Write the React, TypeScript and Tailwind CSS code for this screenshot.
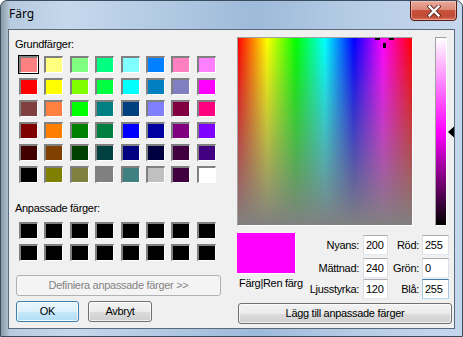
import React from "react";

const basic: string[][] = [
  ["#FF8080", "#FFFF80", "#80FF80", "#00FF80", "#80FFFF", "#0080FF", "#FF80C0", "#FF80FF"],
  ["#FF0000", "#FFFF00", "#80FF00", "#00FF40", "#00FFFF", "#0080C0", "#8080C0", "#FF00FF"],
  ["#804040", "#FF8040", "#00FF00", "#008080", "#004080", "#8080FF", "#800040", "#FF0080"],
  ["#800000", "#FF8000", "#008000", "#008040", "#0000FF", "#0000A0", "#800080", "#8000FF"],
  ["#400000", "#804000", "#004000", "#004040", "#000080", "#000040", "#400040", "#400080"],
  ["#000000", "#808000", "#808040", "#808080", "#408080", "#C0C0C0", "#400040", "#FFFFFF"],
];

const custom: string[][] = [Array(8).fill("#000000"), Array(8).fill("#000000")];

function Cell({ color, selected }: { color: string; selected?: boolean }) {
  return (
    <div className="w-[26px] h-[22px]">
      <div
        className={
          selected
            ? "w-[21px] h-[19px] border border-black"
            : "w-[21px] h-[19px] border border-transparent"
        }
      >
        <div
          className="w-[19px] h-[17px] border-t-2 border-l-2 border-t-[#808080] border-l-[#808080] border-r border-b border-r-white border-b-white"
          style={{ backgroundColor: color }}
        />
      </div>
    </div>
  );
}

function Grid({ rows, selectFirst }: { rows: string[][]; selectFirst?: boolean }) {
  return (
    <div className="ml-[2px] flex flex-col">
      {rows.map((r, i) => (
        <div key={i} className="flex">
          {r.map((c, j) => (
            <Cell key={j} color={c} selected={selectFirst && i === 0 && j === 0} />
          ))}
        </div>
      ))}
    </div>
  );
}

function Input({ value, focused }: { value: string; focused?: boolean }) {
  return (
    <div
      className={
        focused
          ? "h-[20px] bg-white border border-t-[#3d7bad] border-l-[#a4c9e3] border-r-[#a4c9e3] border-b-[#b7d9ed] flex items-center pl-[2px]"
          : "h-[20px] bg-white border border-t-[#abadb3] border-l-[#dbdfe6] border-r-[#dbdfe6] border-b-[#e3e9ef] flex items-center pl-[2px]"
      }
    >
      {value}
    </div>
  );
}

function Label({ text }: { text: string }) {
  return <div className="h-[20px] flex items-center justify-end whitespace-nowrap">{text}</div>;
}

const btn =
  "h-[21px] rounded-[3px] border border-[#707070] bg-[linear-gradient(to_bottom,#f2f2f2_0%,#ebebeb_50%,#dddddd_51%,#cfcfcf_100%)] shadow-[inset_0_0_0_1px_rgba(255,255,255,0.7)] flex items-center justify-center text-black";

export default function App() {
  return (
    <div className="w-[463px] h-[337px] bg-white">
      <div className="w-[463px] h-[337px] rounded-t-[7px] border border-[#3b4c5e] bg-[linear-gradient(to_right,#8c9aa0_0%,#b7cbe0_2%,#c5d8ec_15%,#a8c2de_45%,#9dbad9_55%,#b7cde6_78%,#c4d7ed_100%)] flex flex-col overflow-hidden">
        {/* title bar */}
        <div className="h-[28px] flex items-start justify-between pl-[8px] pr-[5px]">
          <div
            className="mt-[5px] text-[12px] leading-[16px] text-black"
            style={{ fontFamily: '"Segoe UI", "Noto Sans", sans-serif' }}
          >
            Färg
          </div>
          <div className="-mt-[1px] w-[47px] h-[21px] rounded-b-[4px] border border-[#5a1a10] bg-[linear-gradient(to_bottom,#e9a99b_0%,#dd8a78_45%,#c8513c_50%,#c24b36_80%,#d6705a_100%)] shadow-[inset_0_0_0_1px_rgba(255,220,210,0.5)] flex items-center justify-center">
            <svg width="14" height="12" viewBox="0 0 14 12">
              <path d="M2.5 1.5 L11.5 10.5 M11.5 1.5 L2.5 10.5" stroke="#5b2a22" strokeWidth="4.2" strokeLinecap="square" />
              <path d="M2.5 1.5 L11.5 10.5 M11.5 1.5 L2.5 10.5" stroke="#ffffff" strokeWidth="2.4" strokeLinecap="square" />
            </svg>
          </div>
        </div>
        {/* client */}
        <div className="flex-1 px-[7px] pb-[7px] flex">
          <div
            className="w-[447px] h-[300px] border border-[#5b6a7a] bg-[#f0f0f0] flex pl-[7px] text-[11px] leading-[13px] tracking-[-0.3px] text-black"
            style={{ fontFamily: '"Liberation Sans", Arial, sans-serif' }}
          >
            {/* left column */}
            <div className="w-[205px] flex flex-col pt-[8px]">
              <div className="h-[13px] -ml-[1px]">Grundfärger:</div>
              <div className="mt-[4px]">
                <Grid rows={basic} selectFirst />
              </div>
              <div className="mt-[15px] h-[13px] -ml-[1px]">Anpassade färger:</div>
              <div className="mt-[6px]">
                <Grid rows={custom} />
              </div>
              <div className="mt-[10px] h-[21px] rounded-[3px] border border-[#adb2b5] bg-[#f4f4f4] text-[#838383] flex items-center justify-center">
                Definiera anpassade färger &gt;&gt;
              </div>
              <div className="mt-[5px] flex gap-[9px]">
                <div className="w-[63px] h-[21px] rounded-[3px] border border-[#3c7fb1] bg-[linear-gradient(to_bottom,#eaf6fd_0%,#dcf1fc_50%,#c5e7fa_51%,#b2def6_100%)] shadow-[inset_0_0_0_1px_rgba(255,255,255,0.8)] flex items-center justify-center">
                  OK
                </div>
                <div className={`w-[64px] ${btn}`}>Avbryt</div>
              </div>
            </div>
            {/* right column */}
            <div className="ml-[16px] flex flex-col pt-[7px]">
              <div className="flex">
                <div className="relative w-[176px] h-[189px] border border-t-[#a0a0a0] border-l-[#a0a0a0] border-r-white border-b-white bg-[linear-gradient(to_bottom,rgba(128,128,128,0)_0%,#808080_100%),linear-gradient(to_right,#ff0000_0%,#ffff00_16.67%,#00ff00_33.33%,#00ffff_50%,#0000ff_66.67%,#ff00ff_83.33%,#ff0000_100%)]">
                  <div className="absolute left-[137px] top-0 w-[5px] h-[2px] bg-black" />
                  <div className="absolute left-[151px] top-0 w-[5px] h-[2px] bg-black" />
                  <div className="absolute left-[145px] top-[5px] w-[3px] h-[5px] bg-black" />
                </div>
                <div className="relative ml-[22px] w-[12px] h-[189px] border border-t-[#a0a0a0] border-l-[#a0a0a0] border-r-white border-b-white bg-[linear-gradient(to_bottom,#ffffff_0%,#ff00ff_50%,#000000_100%)]">
                  <svg className="absolute left-[12px] top-[88px]" width="7" height="12" viewBox="0 0 7 12">
                    <path d="M0 6 L6 0.5 L6 11.5 Z" fill="#000" />
                  </svg>
                </div>
              </div>
              <div className="mt-[7px] flex">
                <div className="w-[59px] flex flex-col">
                  <div className="w-[59px] h-[41px] bg-[#ff00ff] border-r border-b border-r-white border-b-white" />
                  <div className="mt-[3px] ml-[2px] whitespace-nowrap">Färg|Ren färg</div>
                </div>
                <div className="w-[67px] pr-[4px] pt-[2px] flex flex-col gap-[1px]">
                  <Label text="Nyans:" />
                  <div className="h-[1px]" />
                  <Label text="Mättnad:" />
                  <Label text="Ljusstyrka:" />
                </div>
                <div className="w-[25px] pt-[2px] flex flex-col gap-[1px]">
                  <Input value="200" />
                  <div className="h-[1px]" />
                  <Input value="240" />
                  <Input value="120" />
                </div>
                <div className="w-[34px] pr-[3px] pt-[2px] flex flex-col gap-[1px]">
                  <Label text="Röd:" />
                  <div className="h-[1px]" />
                  <Label text="Grön:" />
                  <Label text="Blå:" />
                </div>
                <div className="w-[27px] pt-[2px] flex flex-col gap-[1px]">
                  <Input value="255" />
                  <div className="h-[1px]" />
                  <Input value="0" />
                  <Input value="255" focused />
                </div>
              </div>
              <div className={`mt-[4px] ml-[1px] w-[214px] ${btn}`}>Lägg till anpassade färger</div>
            </div>
          </div>
        </div>
      </div>
    </div>
  );
}
